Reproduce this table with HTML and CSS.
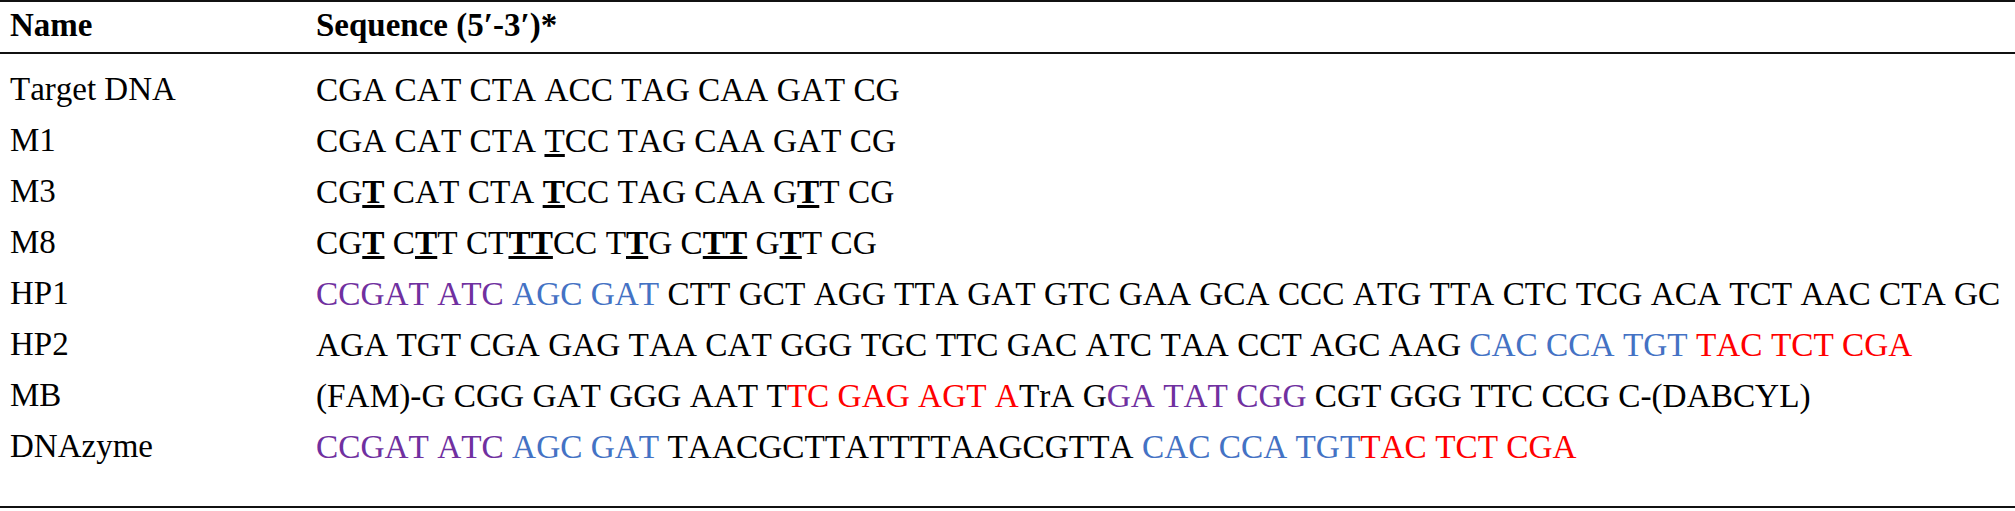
FILE: index.html
```html
<!DOCTYPE html>
<html>
<head>
  <title>Oligonucleotide sequences</title>
  <link rel="stylesheet" href="styles.css">
</head>
<body>
  <table class="seq-table">
    <thead>
      <tr>
        <th class="col-name">Name</th>
        <th class="col-seq">Sequence (5′-3′)*</th>
      </tr>
    </thead>
    <tbody>
      <tr>
        <td class="col-name">Target DNA</td>
        <td class="col-seq">CGA CAT CTA ACC TAG CAA GAT CG</td>
      </tr>
      <tr>
        <td class="col-name">M1</td>
        <td class="col-seq">CGA CAT CTA <u>T</u>CC TAG CAA GAT CG</td>
      </tr>
      <tr>
        <td class="col-name">M3</td>
        <td class="col-seq">CG<b class="mut">T</b> CAT CTA <b class="mut">T</b>CC TAG CAA G<b class="mut">T</b>T CG</td>
      </tr>
      <tr>
        <td class="col-name">M8</td>
        <td class="col-seq">CG<b class="mut">T</b> C<b class="mut">T</b>T CT<b class="mut">TT</b>CC T<b class="mut">T</b>G C<b class="mut">TT</b> G<b class="mut">T</b>T CG</td>
      </tr>
      <tr>
        <td class="col-name">HP1</td>
        <td class="col-seq"><span class="purple">CCGAT ATC</span> <span class="blue">AGC GAT</span> CTT GCT AGG TTA GAT GTC GAA GCA CCC ATG TTA CTC TCG ACA TCT AAC CTA GC</td>
      </tr>
      <tr>
        <td class="col-name">HP2</td>
        <td class="col-seq">AGA TGT CGA GAG TAA CAT GGG TGC TTC GAC ATC TAA CCT AGC AAG <span class="blue">CAC CCA TGT</span> <span class="red">TAC TCT CGA</span></td>
      </tr>
      <tr>
        <td class="col-name">MB</td>
        <td class="col-seq">(FAM)-G CGG GAT GGG AAT T<span class="red">TC GAG AGT A</span>TrA G<span class="purple">GA TAT CGG</span> CGT GGG TTC CCG C-(DABCYL)</td>
      </tr>
      <tr>
        <td class="col-name">DNAzyme</td>
        <td class="col-seq"><span class="purple">CCGAT ATC</span> <span class="blue">AGC GAT</span> TAACGCTTATTTTAAGCGTTA <span class="blue">CAC CCA TGT</span><span class="red">TAC TCT CGA</span></td>
      </tr>
    </tbody>
  </table>
</body>
</html>
```

FILE: styles.css
```css
/* Sequence table */
body {
  margin: 0;
  padding: 0;
  background-color: #fff;
  color: #000;
  font-family: "Liberation Serif", "Times New Roman", serif;
  font-size: 33px;
  font-kerning: none;
  font-feature-settings: "kern" 0;
}

.seq-table {
  width: 100%;
  border-collapse: collapse;
  border-top: 2px solid #111;
  border-bottom: 2px solid #111;
}

.seq-table th,
.seq-table td {
  padding: 0;
  text-align: left;
  white-space: nowrap;
  vertical-align: top;
}

.seq-table th {
  font-weight: bold;
  line-height: 46px;
  padding-bottom: 4px;
  border-bottom: 2px solid #111;
}

.seq-table td {
  font-weight: normal;
  line-height: 51px;
}

.seq-table td.col-seq {
  font-size: 33.3px;
}

.seq-table tbody tr:first-child td {
  padding-top: 10px;
}

.seq-table tbody tr:last-child td {
  padding-bottom: 34px;
}

.col-name {
  width: 306px;
  padding-left: 10px !important;
}

.mut {
  font-weight: bold;
  text-decoration: underline;
}

.purple {
  color: #7030a0;
}

.blue {
  color: #4472c4;
}

.red {
  color: #ff0000;
}
```
